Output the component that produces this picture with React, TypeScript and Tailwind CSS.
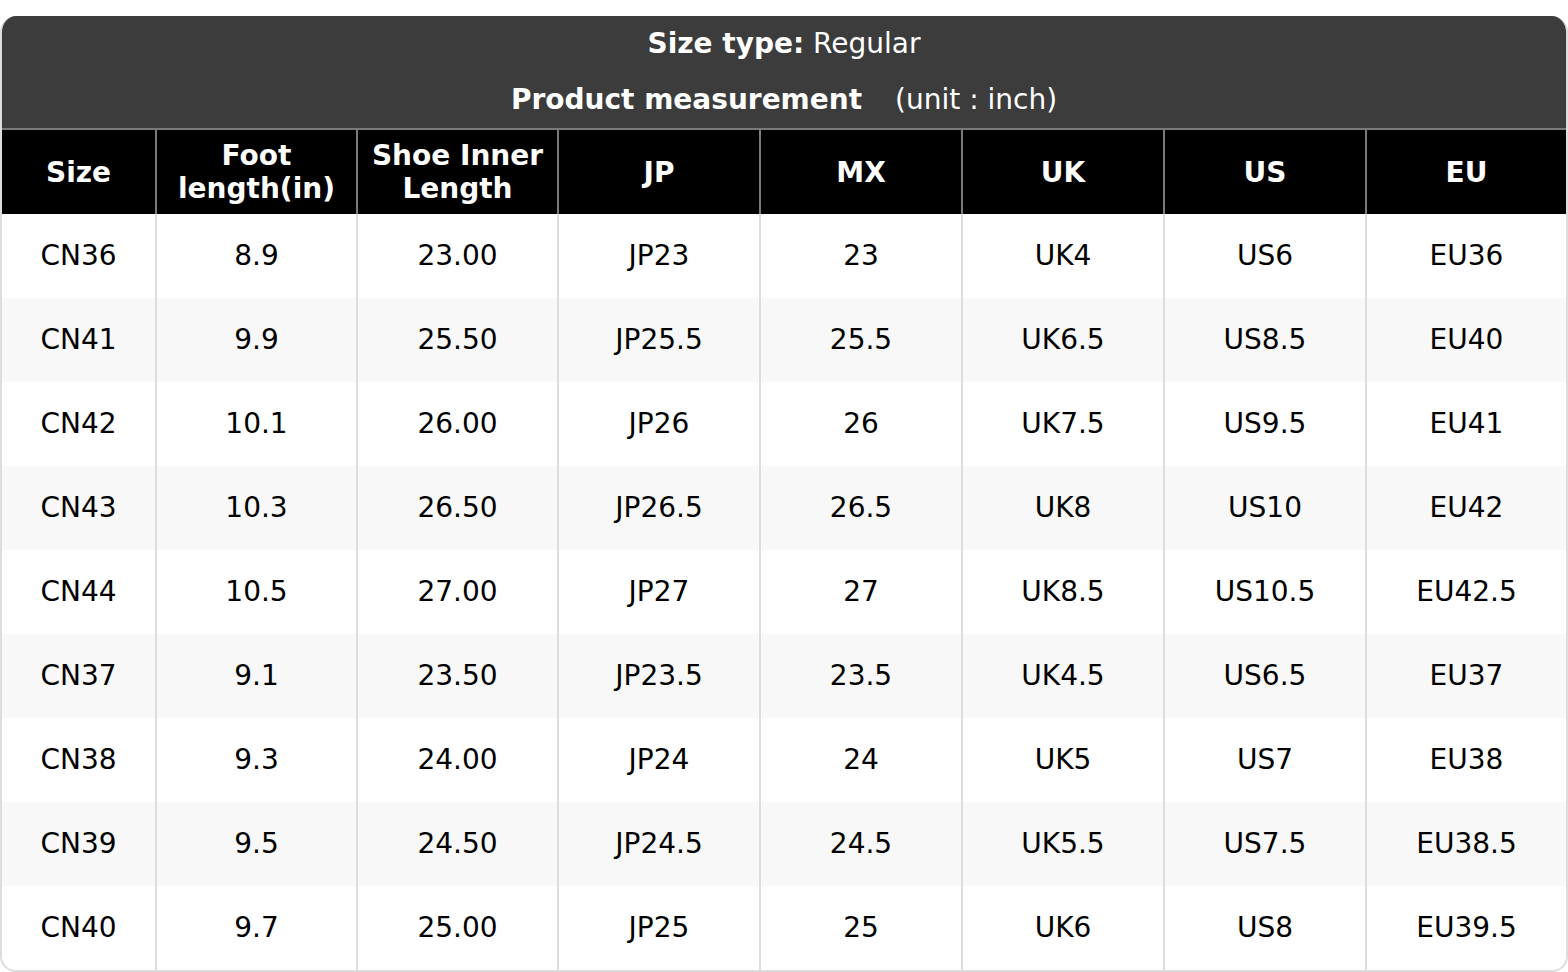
import React from "react";

const headers = ["Size", "Foot\nlength(in)", "Shoe Inner\nLength", "JP", "MX", "UK", "US", "EU"];
const widths = ["w-[153px]", "w-[201px]", "w-[201px]", "w-[202px]", "w-[202px]", "w-[202px]", "w-[202px]", "flex-1"];
const rows = [
  ["CN36", "8.9", "23.00", "JP23", "23", "UK4", "US6", "EU36"],
  ["CN41", "9.9", "25.50", "JP25.5", "25.5", "UK6.5", "US8.5", "EU40"],
  ["CN42", "10.1", "26.00", "JP26", "26", "UK7.5", "US9.5", "EU41"],
  ["CN43", "10.3", "26.50", "JP26.5", "26.5", "UK8", "US10", "EU42"],
  ["CN44", "10.5", "27.00", "JP27", "27", "UK8.5", "US10.5", "EU42.5"],
  ["CN37", "9.1", "23.50", "JP23.5", "23.5", "UK4.5", "US6.5", "EU37"],
  ["CN38", "9.3", "24.00", "JP24", "24", "UK5", "US7", "EU38"],
  ["CN39", "9.5", "24.50", "JP24.5", "24.5", "UK5.5", "US7.5", "EU38.5"],
  ["CN40", "9.7", "25.00", "JP25", "25", "UK6", "US8", "EU39.5"],
];

export default function App() {
  return (
    <div className="w-[1568px] h-[972px] bg-white pt-[16px]" style={{ fontFamily: '"DejaVu Sans", sans-serif' }}>
      <div className="w-[1568px] rounded-[16px] overflow-hidden border-2 border-[#dddddd] border-t-0">
        <div className="bg-[#3c3c3c] text-white text-[28px] leading-[56px] text-center h-[112px]">
          <div className="h-[56px]">
            <span className="font-bold">Size type:</span> Regular
          </div>
          <div className="h-[56px]">
            <span className="font-bold">Product measurement</span>
            <span className="ml-[33px]">(unit : inch)</span>
          </div>
        </div>
        <div className="flex bg-black border-t-2 border-[#7a7a7a] h-[86px]">
          {headers.map((h, i) => (
            <div
              key={i}
              className={`${widths[i]} shrink-0 flex items-center justify-center text-center text-white font-bold text-[28px] leading-[33px] whitespace-pre-line ${i > 0 ? "border-l-2 border-[#7a7a7a]" : ""}`}
            >
              {h}
            </div>
          ))}
        </div>
        {rows.map((r, ri) => (
          <div key={ri} className={`flex h-[84px] ${ri % 2 === 1 ? "bg-[#f8f8f8]" : "bg-white"}`}>
            {r.map((c, ci) => (
              <div
                key={ci}
                className={`${widths[ci]} shrink-0 flex items-center justify-center text-[28px] text-black ${ci > 0 ? "border-l-2 border-[#dddddd]" : ""}`}
              >
                {c}
              </div>
            ))}
          </div>
        ))}
      </div>
    </div>
  );
}
